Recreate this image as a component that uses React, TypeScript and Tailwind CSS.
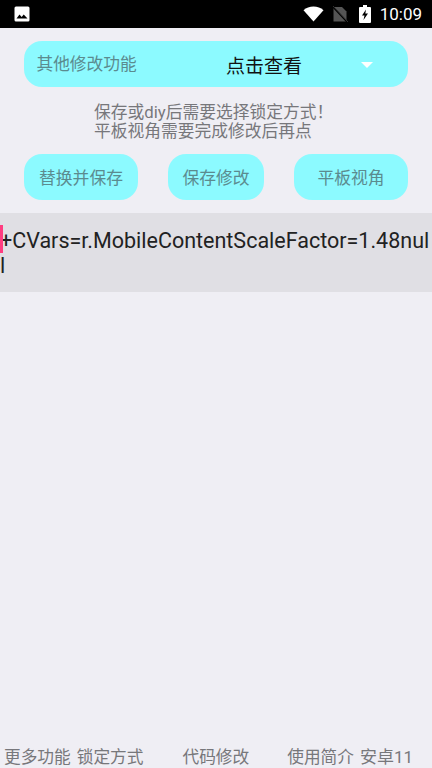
const cjk = "font-['Roboto','Noto_Sans_CJK_SC',sans-serif]";

function StatusBar() {
  return (
    <div className="flex h-[28px] items-center bg-black pl-[14px] pr-[10px] text-white">
      <svg width="16" height="16" viewBox="0 0 16 16" className="mt-[-1px]">
        <path fill="#fff" d="M2 .5h12A1.5 1.5 0 0 1 15.5 2v12a1.5 1.5 0 0 1-1.500 1.500H2A1.500 1.500 0 0 1 .5 14V2A1.500 1.500 0 0 1 2 .5Z" />
        <path fill="#000" d="M2.500 12.500 5.500 8.500l2.200 2.600 2-2.600 3.800 4Z" />
      </svg>
      <svg width="21" height="16" viewBox="0 0 21 16" className="ml-auto">
        <path fill="#fff" d="M10.500 15.500 .5 4.200C3.200 1.800 6.600.5 10.500.5s7.300 1.300 10 3.700Z" />
      </svg>
      <svg width="16" height="17" viewBox="0 0 16 17" className="ml-[8px]">
        <path fill="#555" d="M1.500 1h8.500l4.500 4.500V15.500H1.500Z" />
        <path stroke="#000" strokeWidth="1.500" d="M0 0 16 17" />
        <path stroke="#333" strokeWidth="1" d="M1 0 16 16" />
      </svg>
      <svg width="12" height="18" viewBox="0 0 12 18" className="ml-[11px]">
        <path fill="#fff" d="M4 0h4v2h3a1 1 0 0 1 1 1v14a1 1 0 0 1-1 1H1a1 1 0 0 1-1-1V3a1 1 0 0 1 1-1h3Z" />
        <path fill="#000" d="M7 4.500 3 10.500h2.500L4.500 15 9 8.500H6.300Z" />
      </svg>
      <span className="ml-[9px] font-['Roboto',sans-serif] text-[17px] leading-none">10:09</span>
    </div>
  );
}

function Btn({ label, w }: { label: string; w: string }) {
  return (
    <div className={`flex h-[46px] items-center justify-center rounded-[18px] bg-[#8cfaff] pt-[3px] text-[16.8px] text-[#5b8b8f] ${w}`}>
      {label}
    </div>
  );
}

export default function App() {
  return (
    <div className={`flex h-[768px] w-[432px] flex-col overflow-hidden bg-[#efeef4] ${cjk}`}>
      <StatusBar />

      <div className="mx-[24px] mt-[13px] flex h-[46px] items-center rounded-[18px] bg-[#8cfaff] pl-[12.500px]">
        <span className="mt-[1px] w-[189.500px] text-[16.7px] text-[#5b8b8f]">其他修改功能</span>
        <span className="mt-[6px] text-[19px] text-[#111]">点击查看</span>
        <span className="ml-[59px] mt-[2px] h-0 w-0 border-x-[6px] border-t-[6px] border-x-transparent border-t-white" />
      </div>

      <p className="mt-[16px] pl-[94px] text-[16.75px] leading-[19px] text-[#77777b]">
        保存或diy后需要选择锁定方式！
        <br />
        平板视角需要完成修改后再点
      </p>

      <div className="mx-[24px] mt-[13px] flex justify-between">
        <Btn label="替换并保存" w="w-[114px]" />
        <Btn label="保存修改" w="w-[96px]" />
        <Btn label="平板视角" w="w-[114px]" />
      </div>

      <div className="relative mt-[13px] h-[79px] bg-[#e0dfe4] pt-[15px] text-[21.5px] leading-[25px] text-[#222]">
        <span className="absolute left-0 top-[12px] h-[28px] w-[2.500px] bg-[#ff3d81]" />
        <div className="break-all">+CVars=r.MobileContentScaleFactor=1.48null</div>
      </div>

      <div className="mt-auto flex h-[22px] items-center pl-[4px] pt-[1px] text-[16.7px] text-[#77777b]">
        <span>更多功能</span>
        <span className="ml-[6px]">锁定方式</span>
        <span className="ml-[39px]">代码修改</span>
        <span className="ml-[38px]">使用简介</span>
        <span className="ml-[6px] text-[17px]">安卓11</span>
      </div>
    </div>
  );
}
